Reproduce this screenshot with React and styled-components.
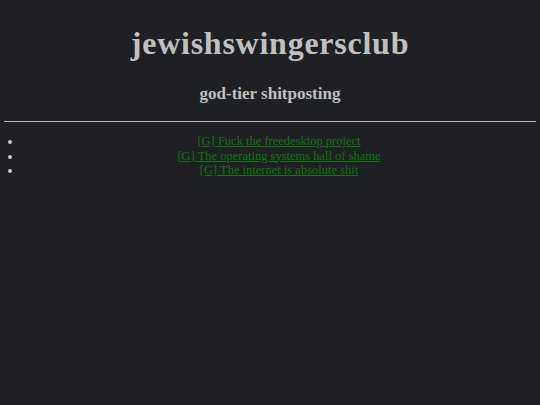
import React from "react";
import styled, { createGlobalStyle } from "styled-components";

const posts = [
  "[G] Fuck the freedesktop project",
  "[G] The operating systems hall of shame",
  "[G] The internet is absolute shit",
];

const GlobalStyle = createGlobalStyle`
  html, body {
    background: #1f2023;
  }
  body {
    margin: 4px;
    color: #c0c0c0;
    font-family: "Liberation Serif", "Times New Roman", serif;
  }
`;

const Header = styled.header`
  text-align: center;
`;

const Title = styled.h1`
  font-size: 32px;
  letter-spacing: 0.75px;
  margin: 21px 0 22px;
`;

const Tagline = styled.h3`
  font-size: 17px;
  margin: 18px 0 17px;
`;

const Rule = styled.hr`
  border: none;
  border-top: 1px solid #b8b8b8;
  margin: 0;
`;

const PostList = styled.ul`
  margin: 12px 0;
  padding-left: 18px;
  font-size: 12.5px;
  line-height: 14.5px;
`;

const Post = styled.li`
  text-align: center;
  color: #c8c8c8;
`;

const PostLink = styled.a`
  color: #0b780b;
`;

export default function App() {
  return (
    <>
      <GlobalStyle />
      <Header>
        <Title>jewishswingersclub</Title>
        <Tagline>god-tier shitposting</Tagline>
      </Header>
      <Rule />
      <PostList>
        {posts.map((p) => (
          <Post key={p}>
            <PostLink href="#">{p}</PostLink>
          </Post>
        ))}
      </PostList>
    </>
  );
}
